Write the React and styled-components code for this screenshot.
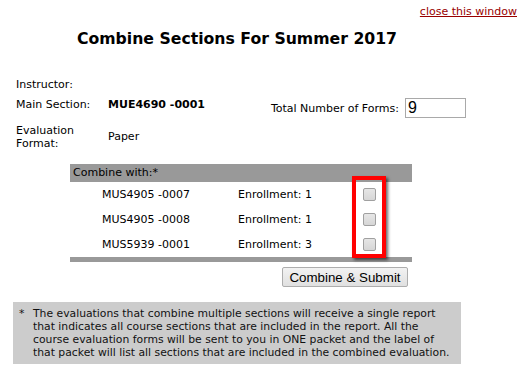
import React from "react";
import styled, { createGlobalStyle } from "styled-components";

const GlobalStyle = createGlobalStyle`
  body {
    margin: 0;
    background: #ffffff;
    color: #000000;
    font-family: "DejaVu Sans", Verdana, sans-serif;
    font-size: 11px;
  }
`;

const Page = styled.div`
  width: 532px;
  height: 374px;
  overflow: hidden;
`;

const TopBar = styled.div`
  display: flex;
  justify-content: flex-end;
  padding: 5px 15px 0 0;
  line-height: 14px;
`;

const CloseLink = styled.a`
  color: #990000;
  text-decoration: underline;
  cursor: pointer;
`;

const Content = styled.div`
  margin-left: 13px;
  width: 448px;
`;

const Title = styled.h1`
  margin: 10px 0 0;
  text-align: center;
  font-size: 15.7px;
  line-height: 20px;
  font-weight: bold;
`;

const Info = styled.div`
  margin-top: 29px;
  padding-left: 3px;
  display: grid;
  grid-template-columns: 92px 1fr;
  row-gap: 6px;
`;

const Label = styled.div`
  align-self: start;
  width: ${(p) => (p.$narrow ? "80px" : "auto")};
  line-height: ${(p) => (p.$narrow ? "13px" : "14px")};
`;

const Value = styled.div`
  line-height: 14px;
  font-weight: ${(p) => (p.$bold ? "bold" : "normal")};
  align-self: ${(p) => (p.$center ? "center" : "start")};
`;

const MainRow = styled.div`
  display: flex;
  justify-content: space-between;
  align-items: flex-start;
  margin-right: -5px;
`;

const FormsCount = styled.label`
  display: flex;
  align-items: center;
  gap: 6px;
`;

const CountInput = styled.input`
  width: 61px;
  height: 20px;
  box-sizing: border-box;
  border: 1px solid #a9a9a9;
  padding: 0 2px;
  font-family: "Liberation Sans", Arial, sans-serif;
  font-size: 16px;
  color: #000;
  outline: none;
`;

const Combine = styled.div`
  position: relative;
  margin: 14px 0 0 57px;
  width: 342px;
`;

const HeaderBar = styled.div`
  background: #999999;
  height: 18px;
  line-height: 18px;
  padding-left: 3px;
`;

const Row = styled.div`
  display: grid;
  grid-template-columns: 32px 136px 125px 13px;
  align-items: center;
  height: 25px;
`;

const Check = styled.input`
  appearance: none;
  margin: 0;
  width: 13px;
  height: 13px;
  border: 1px solid #a0a0a0;
  border-radius: 2px;
  background: linear-gradient(#e6e6e6, #d6d6d6);
  box-sizing: border-box;
`;

const FooterBar = styled.div`
  background: #999999;
  height: 5px;
`;

const Highlight = styled.div`
  position: absolute;
  left: 282px;
  top: 12px;
  width: 34px;
  height: 82px;
  box-sizing: border-box;
  border: 4px solid #ff0000;
  box-shadow: 2px 2px 3px rgba(0, 0, 0, 0.6);
  pointer-events: none;
`;

const Actions = styled.div`
  display: flex;
  justify-content: flex-end;
  padding: 5px 4px 0 0;
`;

const SubmitButton = styled.button`
  width: 126px;
  height: 20px;
  padding: 0;
  font-family: "Liberation Sans", Arial, sans-serif;
  font-size: 13.33px;
  color: #000;
  background: linear-gradient(#f2f2f2, #e0e0e0);
  border: 1px solid #adadad;
  border-radius: 2px;
`;

const Note = styled.div`
  margin-top: 15px;
  background: #cccccc;
  height: 62px;
  box-sizing: border-box;
  padding: 5px 0 0 6px;
  display: flex;
  font-size: 10.8px;
  line-height: 13px;
  color: #111;
`;

const Star = styled.span`
  width: 14px;
  flex: none;
`;

const NoteText = styled.div`
  white-space: nowrap;
`;

const sections = [
  { code: "MUS4905 -0007", enrollment: 1 },
  { code: "MUS4905 -0008", enrollment: 1 },
  { code: "MUS5939 -0001", enrollment: 3 },
];

const noteLines = [
  "The evaluations that combine multiple sections will receive a single report",
  "that indicates all course sections that are included in the report. All the",
  "course evaluation forms will be sent to you in ONE packet and the label of",
  "that packet will list all sections that are included in the combined evaluation.",
];

export default function App() {
  return (
    <Page>
      <GlobalStyle />
      <TopBar>
        <CloseLink>close this window</CloseLink>
      </TopBar>
      <Content>
        <Title>Combine Sections For Summer 2017</Title>
        <Info>
          <Label>Instructor:</Label>
          <Value />
          <Label>Main Section:</Label>
          <MainRow>
            <Value $bold>MUE4690 -0001</Value>
            <FormsCount>
              Total Number of Forms:
              <CountInput defaultValue="9" />
            </FormsCount>
          </MainRow>
          <Label $narrow>Evaluation Format:</Label>
          <Value $center>Paper</Value>
        </Info>
        <Combine>
          <HeaderBar>Combine with:*</HeaderBar>
          {sections.map((s) => (
            <Row key={s.code}>
              <span />
              <span>{s.code}</span>
              <span>Enrollment: {s.enrollment}</span>
              <Check type="checkbox" />
            </Row>
          ))}
          <FooterBar />
          <Highlight />
          <Actions>
            <SubmitButton>Combine &amp; Submit</SubmitButton>
          </Actions>
        </Combine>
        <Note>
          <Star>*</Star>
          <NoteText>
            {noteLines.map((line) => (
              <div key={line}>{line}</div>
            ))}
          </NoteText>
        </Note>
      </Content>
    </Page>
  );
}
